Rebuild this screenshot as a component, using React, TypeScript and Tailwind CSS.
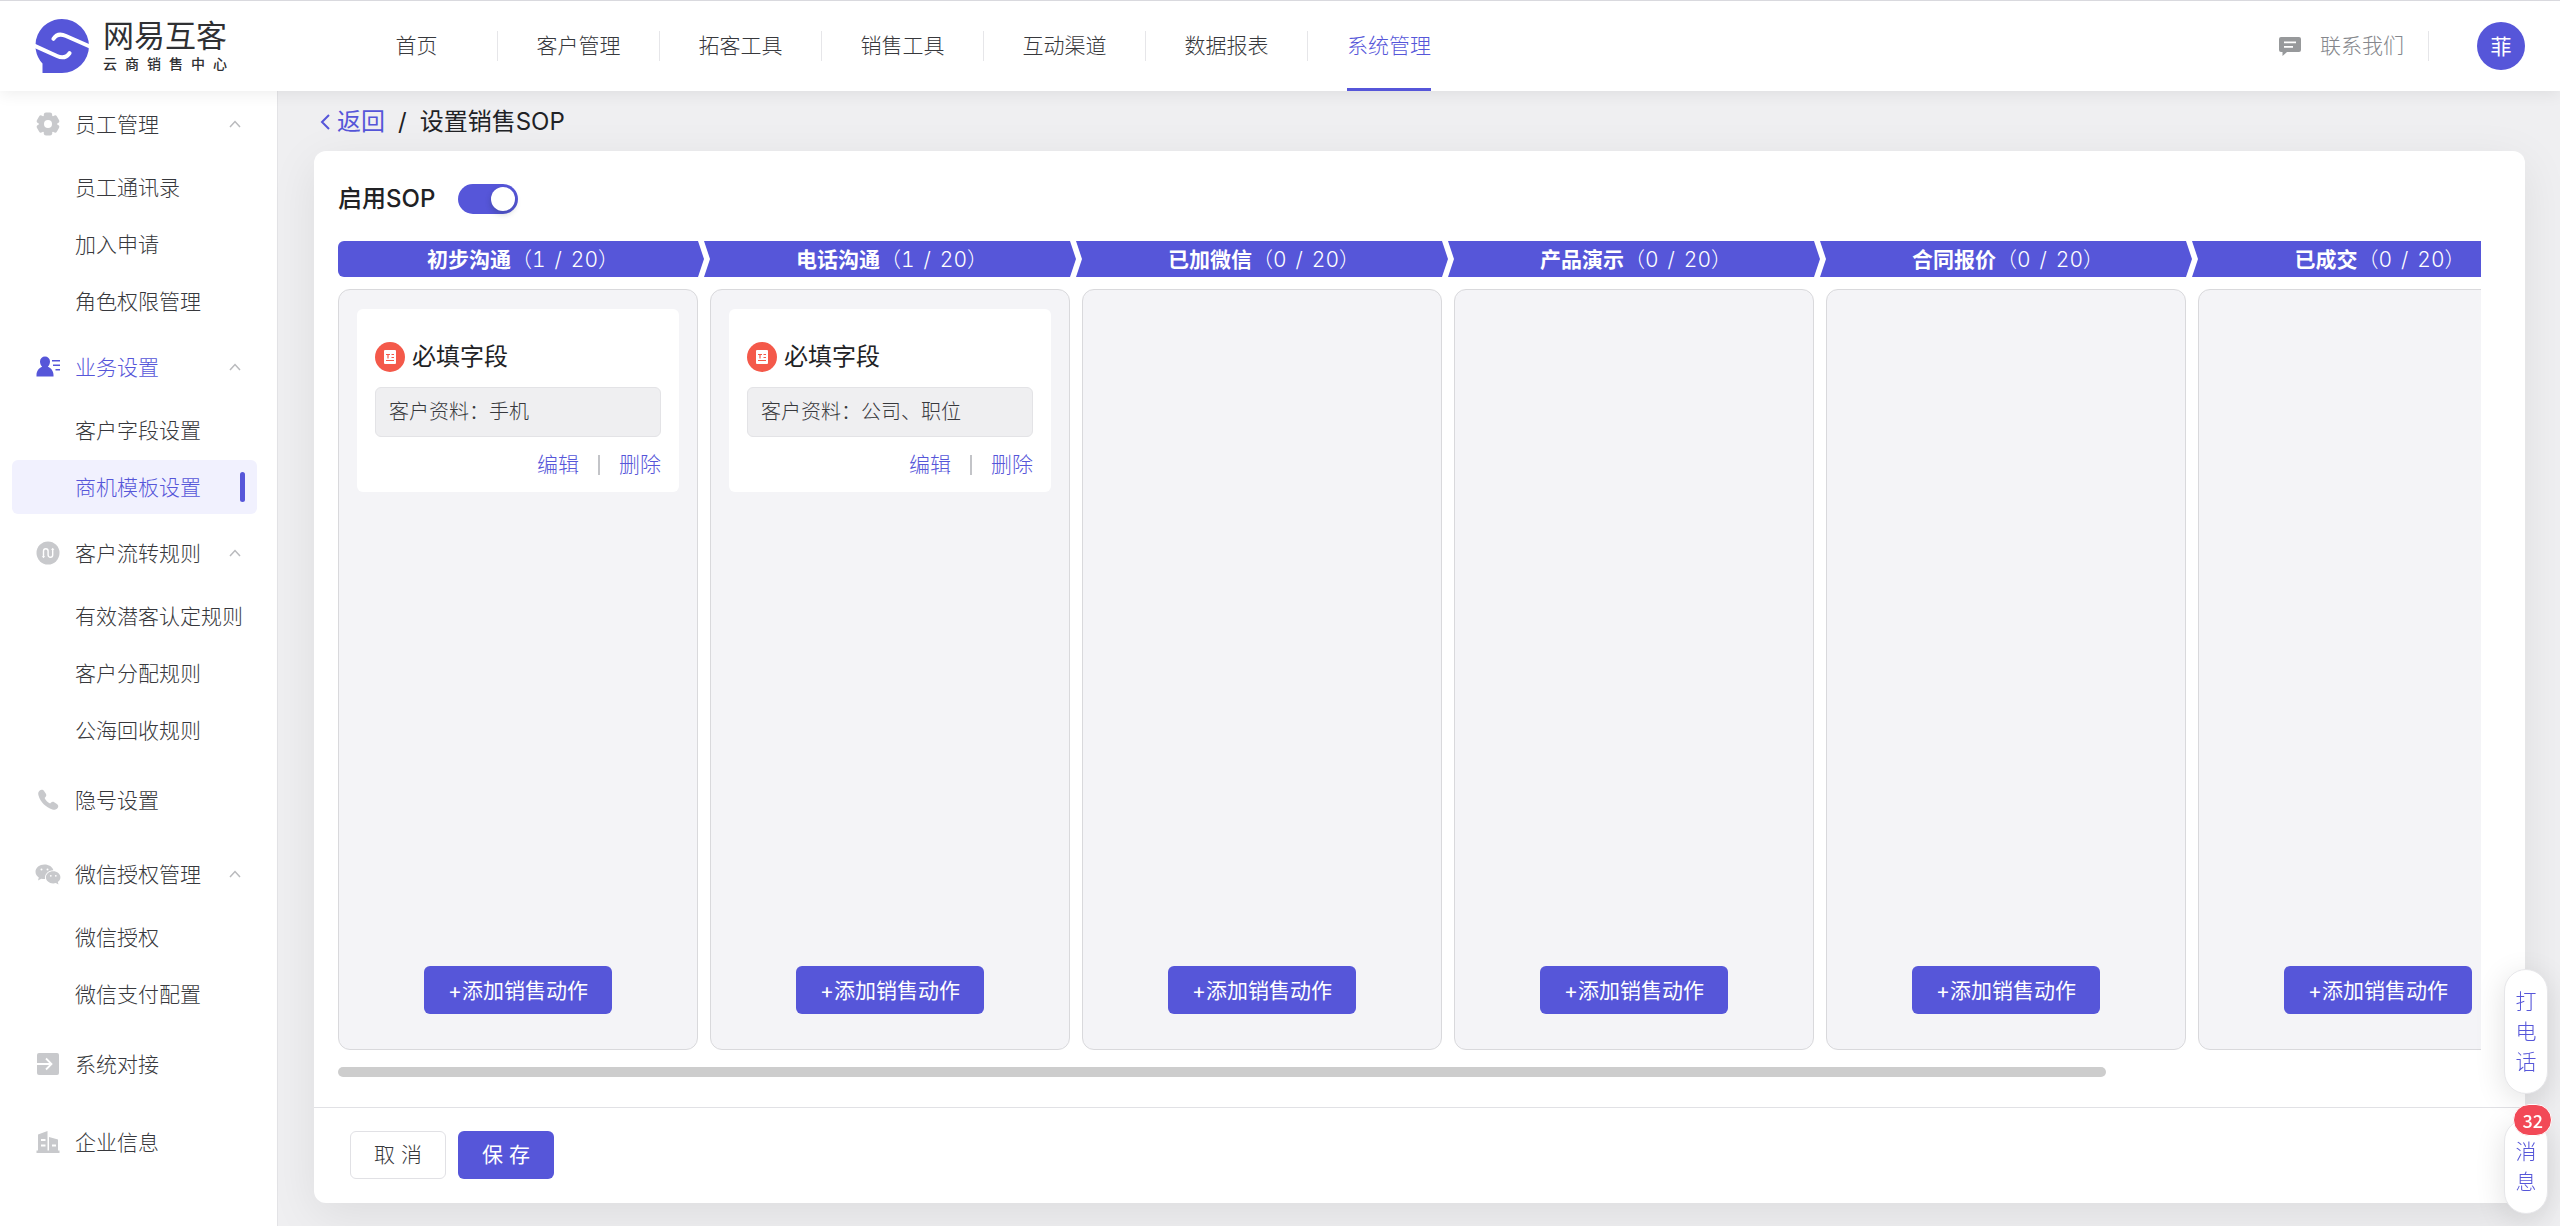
import type { ReactNode } from 'react';

const navItems = ['首页', '客户管理', '拓客工具', '销售工具', '互动渠道', '数据报表', '系统管理'];

const menu: { title: string; icon: ReactNode; active?: boolean; children?: string[] }[] = [
  { title: '员工管理', icon: <GearIcon />, children: ['员工通讯录', '加入申请', '角色权限管理'] },
  { title: '业务设置', icon: <UserIcon />, active: true, children: ['客户字段设置', '商机模板设置'] },
  { title: '客户流转规则', icon: <FlowIcon />, children: ['有效潜客认定规则', '客户分配规则', '公海回收规则'] },
  { title: '隐号设置', icon: <PhoneIcon /> },
  { title: '微信授权管理', icon: <WechatIcon />, children: ['微信授权', '微信支付配置'] },
  { title: '系统对接', icon: <ConnectIcon /> },
  { title: '企业信息', icon: <CompanyIcon /> },
];

const stages = [
  { name: '初步沟通', count: 1, fields: '手机' },
  { name: '电话沟通', count: 1, fields: '公司、职位' },
  { name: '已加微信', count: 0 },
  { name: '产品演示', count: 0 },
  { name: '合同报价', count: 0 },
  { name: '已成交', count: 0 },
];

function GearIcon() {
  return (
    <svg viewBox="0 0 24 24" className="size-6" fill="currentColor">
      <circle cx="12" cy="12" r="9.2" />
      <rect x="7.8" y=".5" width="8.4" height="23" rx="2.2" />
      <rect x="7.8" y=".5" width="8.4" height="23" rx="2.2" transform="rotate(60 12 12)" />
      <rect x="7.8" y=".5" width="8.4" height="23" rx="2.2" transform="rotate(120 12 12)" />
      <circle cx="12" cy="12" r="4" fill="white" />
    </svg>
  );
}

function UserIcon() {
  return (
    <svg viewBox="0 0 24 24" className="size-6" fill="currentColor">
      <path d="M9 1.500a5 5 0 0 1 5 5c0 2.200-.9 4-2.200 5.200 3.200 1 5.700 4.300 5.700 8.300v1.500H0.500V20c0-4 2.500-7.300 5.700-8.300C4.900 10.500 4 8.700 4 6.500a5 5 0 0 1 5-5z" />
      <path d="M16 5h8v1.600h-8zM17 9.500h7v1.600h-7zM19.500 14H24v1.600h-4.500z" />
    </svg>
  );
}

function FlowIcon() {
  return (
    <svg viewBox="0 0 24 24" className="size-6" fill="none">
      <circle cx="12" cy="12" r="11.500" fill="currentColor" />
      <path d="M7.500 16V10a2.300 2.300 0 0 1 4.600 0v4a2.300 2.300 0 0 0 4.600 0V8" stroke="white" strokeWidth="1.400" />
      <path d="M5.800 15.200h3.400l-1.700 2zM15 8.800h3.400l-1.700-2z" fill="white" />
    </svg>
  );
}

function PhoneIcon() {
  return (
    <svg viewBox="0 0 24 24" className="size-6" fill="currentColor">
      <path d="M3.500 2.800C5 1.300 7 1.500 8.200 3.200l1.700 2.600c.7 1.200.5 2.300-.4 3.200l-.9 1c1.200 2.500 3 4.300 5.500 5.600l1-1c.9-.9 2-1 3.100-.3l2.700 1.700c1.700 1.100 1.800 2.900.5 4.300-1.300 1.400-3 1.800-5 1.200C9.800 19.400 4.500 14 2.500 7.500c-.6-1.900-.300-3.500 1-4.700z" />
    </svg>
  );
}

function WechatIcon() {
  return (
    <svg viewBox="0 0 26 24" className="-ml-px h-6 w-[26px]" fill="currentColor">
      <path d="M9.500 2.500C4.500 2.500.5 5.700.5 9.800c0 2.300 1.300 4.300 3.300 5.700L3 18.500l3.300-1.800c1 .3 2 .4 3.200.4h.6c-1-4.800 3-8.900 8.300-8.900C17.500 4.900 13.900 2.500 9.500 2.500z" />
      <path d="M18.200 9.200c-4.100 0-7.300 2.700-7.300 6.100s3.200 6.100 7.300 6.100c.9 0 1.800-.1 2.600-.4l2.700 1.500-.7-2.400c1.600-1.100 2.600-2.900 2.600-4.800 0-3.400-3.200-6.100-7.200-6.100z" />
      <g fill="white">
        <circle cx="6.500" cy="7.500" r="1" />
        <circle cx="12.500" cy="7.500" r="1" />
        <circle cx="15.800" cy="13.800" r=".9" />
        <circle cx="20.800" cy="13.800" r=".9" />
      </g>
    </svg>
  );
}

function ConnectIcon() {
  return (
    <svg viewBox="0 0 24 24" className="size-6" fill="none">
      <rect x="1" y="1" width="22" height="22" rx="2" fill="currentColor" />
      <path d="M1 12h14.500M10 6.500l5.500 5.500-5.500 5.500" stroke="white" strokeWidth="1.800" />
    </svg>
  );
}

function CompanyIcon() {
  return (
    <svg viewBox="0 0 24 24" className="size-6" fill="currentColor">
      <path
        fillRule="evenodd"
        d="M2 4.500 11.500 1v19.500H13V7l9 2.500v11h1.500V23H.5v-2.500H2zM5 9v2h4.500V9zm0 5.500v2h4.500v-2zm11 0v2h4v-2z"
      />
    </svg>
  );
}

function Chevron() {
  return (
    <svg viewBox="0 0 12 8" className="h-2 w-3 text-[#b9babd]" fill="none" stroke="currentColor" strokeWidth="1.500">
      <path d="M1 7l5-5.500L11 7" />
    </svg>
  );
}

function Logo() {
  return (
    <a href="#" className="flex items-center gap-[14px] text-[#2f3033]">
      <svg viewBox="0 0 54 54" className="size-[54px]">
        <path d="M27 0a26.500 26.500 0 0 1 0 54H7.500V44.500A26.500 26.500 0 0 1 27 0z" fill="#5656d9" />
        <g fill="none" stroke="white" strokeWidth="4" strokeLinecap="round" strokeLinejoin="round">
          <path d="M-1 26.500 22 37c5 2.300 9 2 12.500-2.800" />
          <path d="M55 27.500 31 17c-5-2.200-9.500-2-12.500 2.800" />
        </g>
      </svg>
      <span className="flex flex-col">
        <span className="text-[31px] leading-9 font-normal">网易互客</span>
        <span className="flex justify-between text-sm leading-5 font-medium">
          {Array.from('云商销售中心').map((char) => (
            <span key={char}>{char}</span>
          ))}
        </span>
      </span>
    </a>
  );
}

function Header() {
  return (
    <header className="relative z-10 flex h-[91px] shrink-0 items-center border-t border-[#d9d9de] bg-white pr-[35px] pl-[35px] shadow-[0_3px_15px_rgba(0,0,0,0.07)]">
      <div className="w-[301px] shrink-0">
        <Logo />
      </div>
      <nav className="flex h-full items-center">
        {navItems.map((item, i) => {
          const last = i === navItems.length - 1;
          return (
            <a
              key={item}
              href="#"
              className={
                last
                  ? 'relative flex h-full w-[162px] items-center justify-center text-[#5656d9]'
                  : 'flex h-[30px] w-[162px] items-center justify-center border-r border-[#e6e6e9]'
              }
            >
              {item}
              {last && <span className="absolute bottom-0 h-[3px] w-[84px] bg-[#5656d9]" />}
            </a>
          );
        })}
      </nav>
      <div className="ml-auto flex items-center">
        <a href="#" className="flex h-[30px] items-center gap-[18px] border-r border-[#e6e6e9] pr-6 text-[#85878c]">
          <svg viewBox="0 0 24 24" className="size-6 text-[#97999b]" fill="currentColor">
            <path
              fillRule="evenodd"
              d="M3 3h18a2 2 0 0 1 2 2v11a2 2 0 0 1-2 2H9l-4.500 4V18H3a2 2 0 0 1-2-2V5a2 2 0 0 1 2-2zm3 4.500v1.800h12V7.500zm0 4.500v1.800h9V12z"
            />
          </svg>
          联系我们
        </a>
        <button className="ml-12 size-12 rounded-full bg-[#5656d9] pt-0.5 font-normal text-white">菲</button>
      </div>
    </header>
  );
}

function Sidebar() {
  return (
    <aside className="w-[278px] shrink-0 border-r border-[#e3e3e6] bg-white pr-5 pl-3">
      {menu.map((group, i) => (
        <div key={group.title}>
          <a
            href="#"
            className={`flex items-center pr-4 pl-6 ${group.children ? 'h-[66px]' : 'mt-2 h-[70px]'} ${
              group.children && i > 0 ? 'mt-1.5' : ''
            } ${group.active ? 'text-[#5656d9]' : ''}`}
          >
            <span className={`flex w-[39px] shrink-0 ${group.active ? '' : 'text-[#c8c9cc]'}`}>{group.icon}</span>
            <span className="flex-1 pt-0.5">{group.title}</span>
            {group.children && <Chevron />}
          </a>
          {group.children?.map((child) => {
            const current = child === '商机模板设置';
            return (
              <a
                key={child}
                href="#"
                className={`mt-[3px] flex h-[54px] items-center justify-between rounded-md pr-3 pl-[63px] whitespace-nowrap ${
                  current ? 'bg-[#f1f1fe] text-[#5656d9]' : ''
                }`}
              >
                <span className="pt-0.5">{child}</span>
                {current && <span className="h-[30px] w-[5px] rounded-sm bg-[#5656d9]" />}
              </a>
            );
          })}
        </div>
      ))}
    </aside>
  );
}

function FieldCard({ fields }: { fields: string }) {
  return (
    <div className="rounded-md bg-white px-[18px] pt-[33px] pb-3">
      <h3 className="flex h-[30px] items-center gap-[7px] text-2xl font-normal text-[#212225]">
        <svg viewBox="0 0 30 30" className="size-[30px]">
          <circle cx="15" cy="15" r="15" fill="#f4594a" />
          <rect x="9" y="8" width="12" height="14" rx="1" fill="white" />
          <path d="M11 12.500h4M13 12.500v4M16.500 12.500H19M16.500 15.500H19M11 18.500h8" stroke="#f4594a" strokeWidth="1.200" />
        </svg>
        必填字段
      </h3>
      <p className="mt-[15px] flex h-[50px] items-center rounded-md border border-[#e3e3e6] bg-[#efeff1] px-[13px] text-xl">
        客户资料：{fields}
      </p>
      <div className="mt-3 flex h-[31px] items-center justify-end text-[#5656d9]">
        <button>编辑</button>
        <span className="mx-[19px] h-5 w-0.5 bg-[#c3c4c8]" />
        <button>删除</button>
      </div>
    </div>
  );
}

function Board() {
  return (
    <div className="mt-[27px] flex min-h-0 flex-1 flex-col overflow-hidden">
      <div className="flex h-9 shrink-0 text-white tabular-nums">
        {stages.map((stage, i) => (
          <div
            key={stage.name}
            className={`flex shrink-0 items-center justify-center bg-[#5656d9] pt-0.5 pl-1 ${
              i === 0
                ? 'w-[366px] rounded-l-md [clip-path:polygon(0_0,calc(100%-6px)_0,100%_50%,calc(100%-6px)_100%,0_100%)]'
                : 'w-[372px] [clip-path:polygon(0_0,calc(100%-6px)_0,100%_50%,calc(100%-6px)_100%,0_100%,6px_50%)]'
            }`}
          >
            <b className="font-bold">{stage.name}</b>（{stage.count}
            <span className="mx-[9px]">/</span>20）
          </div>
        ))}
      </div>
      <div className="mt-3 flex min-h-0 flex-1 gap-3">
        {stages.map((stage) => (
          <section
            key={stage.name}
            className="flex w-[360px] shrink-0 flex-col justify-between rounded-xl border border-[#d9d9dc] bg-[#f4f4f7] px-[18px] pt-[19px] pb-[35px]"
          >
            <div>{stage.fields && <FieldCard fields={stage.fields} />}</div>
            <button className="h-12 self-center rounded-md bg-[#5656d9] px-6 pt-0.5 font-normal text-white">
              +添加销售动作
            </button>
          </section>
        ))}
      </div>
    </div>
  );
}

function FloatingButtons() {
  return (
    <div className="fixed right-3 bottom-3 z-20 flex flex-col gap-[25px] leading-[30px] text-[#5656d9]">
      <button className="w-11 rounded-full border border-[#e6e6e9] bg-white px-[10px] pt-[17px] pb-4 shadow-[0_6px_30px_rgba(0,0,0,0.12)]">
        打电话
      </button>
      <button className="relative w-11 rounded-full border border-[#e6e6e9] bg-white px-[10px] pt-[17px] pb-4 shadow-[0_6px_30px_rgba(0,0,0,0.12)]">
        消息
        <span className="absolute -top-4 -right-[5px] flex h-8 items-center rounded-full border border-white bg-[#f24957] px-2 font-['Noto_Sans_CJK_SC',sans-serif] text-lg font-medium text-white">
          32
        </span>
      </button>
    </div>
  );
}

export default function App() {
  return (
    <div className="flex h-screen min-h-[1226px] flex-col bg-[#efeff1] font-[Inter,'Noto_Sans_CJK_SC',sans-serif] text-[21px] leading-[30px] font-light text-[#37383c]">
      <Header />
      <div className="flex min-h-0 flex-1">
        <Sidebar />
        <main className="flex min-w-0 flex-1 flex-col pr-[35px] pb-[23px] pl-9">
          <div className="flex h-[60px] shrink-0 items-center pt-0.5 pl-[5px] text-2xl font-normal text-[#212225]">
            <a href="#" className="flex items-center gap-[6px] text-[#5656d9]">
              <svg viewBox="0 0 12 18" className="h-[18px] w-3" fill="none" stroke="currentColor" strokeWidth="2">
                <path d="M10 2 3 9l7 7" />
              </svg>
              返回
            </a>
            <span className="mx-[13px]">/</span>
            <h1>设置销售SOP</h1>
          </div>
          <div className="flex min-h-0 flex-1 flex-col rounded-xl bg-white shadow-[0_12px_48px_rgba(0,0,0,0.08)]">
            <div className="flex min-h-0 flex-1 flex-col pt-8 pr-11 pb-[30px] pl-6">
              <label className="flex h-[31px] items-center gap-[23px] text-2xl font-medium text-[#212225]">
                启用SOP
                <input type="checkbox" role="switch" defaultChecked className="peer sr-only" />
                <span className="flex h-[30px] w-[60px] justify-start rounded-full bg-[#c3c4c8] p-[3px] peer-checked:justify-end peer-checked:bg-[#5656d9]">
                  <span className="size-6 rounded-full bg-white shadow-[0_3px_6px_rgba(0,35,11,0.2)]" />
                </span>
              </label>
              <Board />
              <div className="mt-[17px] h-[10px] w-[82.5%] shrink-0 rounded-full bg-[#cdcdcd]" />
            </div>
            <footer className="flex h-24 shrink-0 items-center gap-3 border-t border-[#e1e1e5] pb-0.5 pl-9">
              <button className="h-12 w-24 rounded-md border border-[#e1e1e5] bg-white">取 消</button>
              <button className="h-12 w-24 rounded-md bg-[#5656d9] font-normal text-white">保 存</button>
            </footer>
          </div>
        </main>
      </div>
      <FloatingButtons />
    </div>
  );
}
